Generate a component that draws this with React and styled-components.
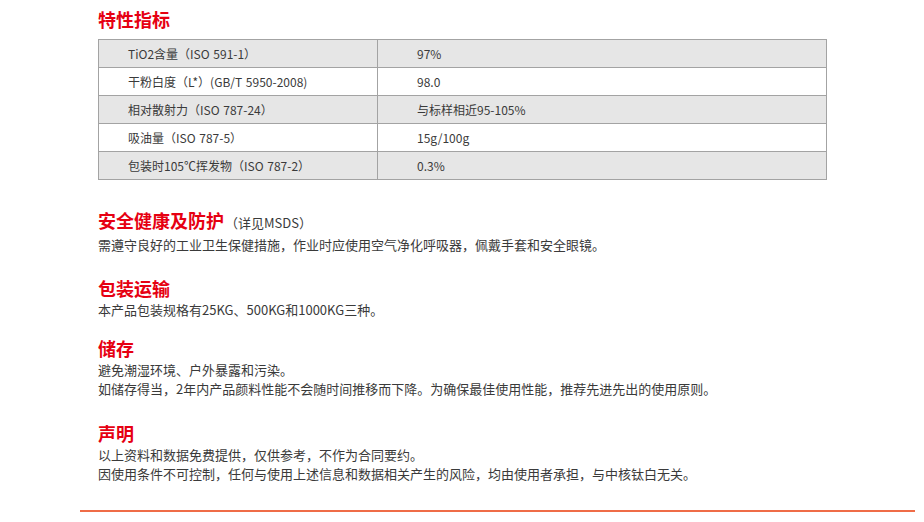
import React from 'react';
import styled, { createGlobalStyle } from 'styled-components';

const GlobalStyle = createGlobalStyle`
	body {
		margin: 0;
		background: #fff;
		font-family: 'Noto Sans CJK SC', 'Noto Sans', sans-serif;
		color: #3a3a3a;
	}
`;

const specs = [
	['TiO2含量（ISO 591-1）', '97%'],
	['干粉白度（L*）(GB/T 5950-2008)', '98.0'],
	['相对散射力（ISO 787-24）', '与标样相近95-105%'],
	['吸油量（ISO 787-5）', '15g/100g'],
	['包装时105℃挥发物（ISO 787-2）', '0.3%'],
];

const sections = [
	{
		title: '安全健康及防护',
		note: '（详见MSDS）',
		gap: 28,
		lines: ['需遵守良好的工业卫生保健措施，作业时应使用空气净化呼吸器，佩戴手套和安全眼镜。'],
	},
	{
		title: '包装运输',
		gap: 22,
		lines: ['本产品包装规格有25KG、500KG和1000KG三种。'],
	},
	{
		title: '储存',
		gap: 17,
		lines: [
			'避免潮湿环境、户外暴露和污染。',
			'如储存得当，2年内产品颜料性能不会随时间推移而下降。为确保最佳使用性能，推荐先进先出的使用原则。',
		],
	},
	{
		title: '声明',
		gap: 23,
		lines: [
			'以上资料和数据免费提供，仅供参考，不作为合同要约。',
			'因使用条件不可控制，任何与使用上述信息和数据相关产生的风险，均由使用者承担，与中核钛白无关。',
		],
	},
];

const App = () => {
	return (
		<>
			<GlobalStyle />
			<Page>
				<Content>
					<Heading>特性指标</Heading>
					<SpecTable>
						<colgroup>
							<col style={{ width: 279 }} />
							<col />
						</colgroup>
						<tbody>
							{specs.map(([name, value], i) => (
								<SpecRow key={name} shaded={i % 2 === 0}>
									<NameCell>{name}</NameCell>
									<ValueCell>{value}</ValueCell>
								</SpecRow>
							))}
						</tbody>
					</SpecTable>

					{sections.map((s) => (
						<Section key={s.title} gap={s.gap}>
							<Heading>
								{s.title}
								{s.note && <Note>{s.note}</Note>}
							</Heading>
							{s.lines.map((line) => (
								<Text key={line}>{line}</Text>
							))}
						</Section>
					))}
				</Content>
				<Rule />
			</Page>
		</>
	);
};

export default App;

const Page = styled.div`
	margin-left: 80px;
	width: 835px;
`;

const Content = styled.div`
	padding: 7px 0 0 18px;
`;

const Heading = styled.h2`
	margin: 0;
	font-size: 18px;
	line-height: 24px;
	font-weight: 700;
	color: #e60012;
`;

const Note = styled.span`
	font-size: 13px;
	font-weight: 400;
	color: #3a3a3a;
	margin-left: 1px;
`;

const SpecTable = styled.table`
	margin-top: 8px;
	width: 729px;
	table-layout: fixed;
	border-collapse: collapse;
	border: 1px solid #a3a3a3;
	font-size: 12px;
	color: #3a3a3a;
`;

const SpecRow = styled.tr`
	height: 28px;
	background: ${(p) => (p.shaded ? '#e6e6e6' : '#fff')};
	border-bottom: 1px solid #a3a3a3;
`;

const NameCell = styled.td`
	padding: 0 0 0 29px;
	border-right: 1px solid #a3a3a3;
	white-space: nowrap;
	word-spacing: 1px;
`;

const ValueCell = styled.td`
	padding: 0 0 0 39px;
`;

const Section = styled.section`
	margin-top: ${(p) => p.gap}px;
`;

const Text = styled.p`
	margin: 0;
	font-size: 13px;
	line-height: 19px;
	color: #3a3a3a;
`;

const Rule = styled.div`
	margin-top: 27px;
	height: 2px;
	background: #ef6c47;
`;
